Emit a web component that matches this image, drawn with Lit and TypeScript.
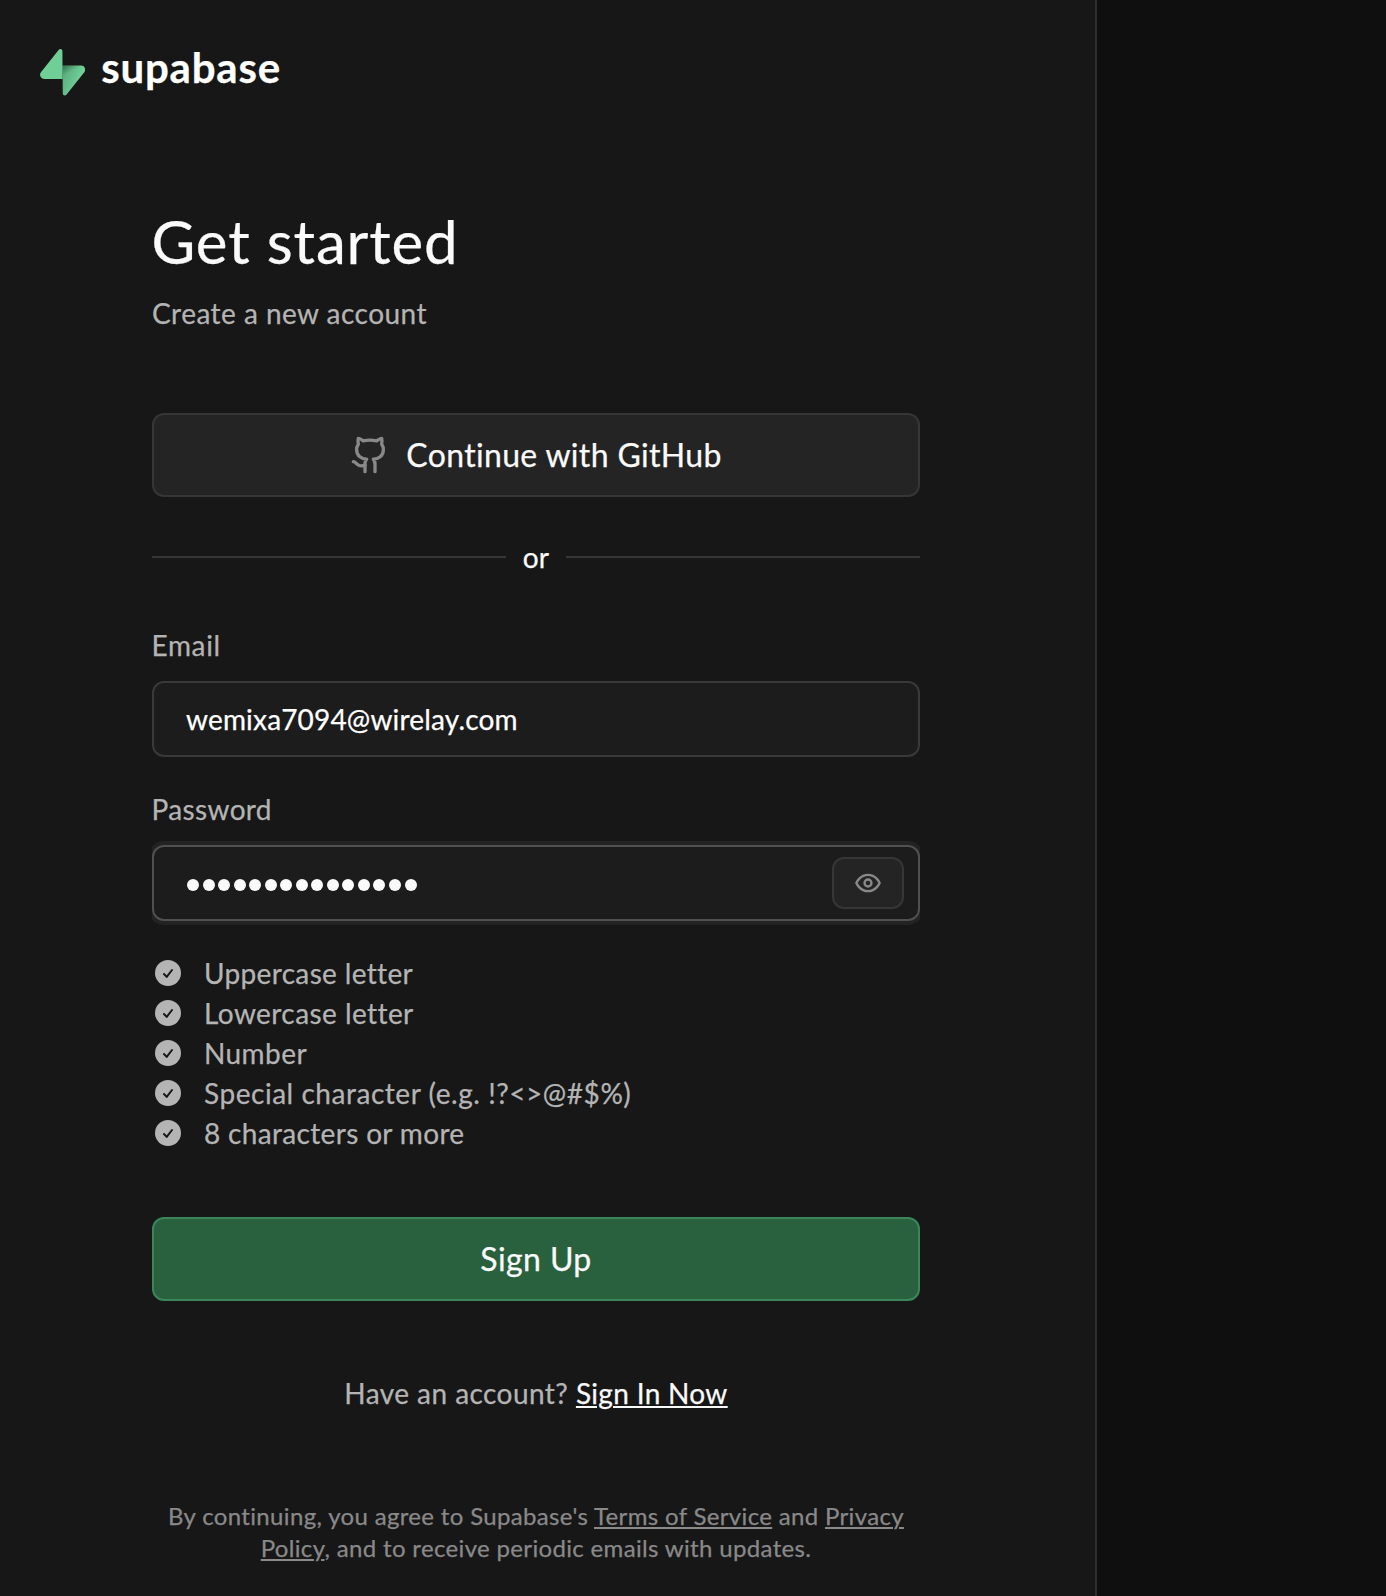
import { LitElement, html, css } from "lit";
import { customElement, property, state } from "lit/decorators.js";

@customElement("brand-logo")
class BrandLogo extends LitElement {
  static styles = css`
    :host { display: flex; gap: 16px; padding-left: 40px; height: 47px; }
    .mark { width: 45.2px; height: 46.8px; display: block; }
    .word {
      font: 700 42px/36px Lato, "Liberation Sans", sans-serif;
      letter-spacing: 0.8px;
      color: #fff;
    }
  `;
  render() {
    return html`
      <svg class="mark" viewBox="0 0 109 113" fill="none">
        <defs>
          <linearGradient id="base" x1="53.97" y1="54.97" x2="94.16" y2="71.83" gradientUnits="userSpaceOnUse">
            <stop stop-color="#58a97a" />
            <stop offset="1" stop-color="#6fcf97" />
          </linearGradient>
          <linearGradient id="shade" x1="36.16" y1="30.58" x2="54.48" y2="65.08" gradientUnits="userSpaceOnUse">
            <stop stop-opacity="0.6" />
            <stop offset="1" stop-opacity="0" />
          </linearGradient>
        </defs>
        <path fill="url(#base)" d="M63.7076 110.284C60.8481 113.885 55.0502 111.912 54.9813 107.314L53.9738 40.0627L99.1935 40.0627C107.384 40.0627 111.952 49.5228 106.859 55.9374L63.7076 110.284Z" />
        <path fill="url(#shade)" d="M63.7076 110.284C60.8481 113.885 55.0502 111.912 54.9813 107.314L53.9738 40.0627L99.1935 40.0627C107.384 40.0627 111.952 49.5228 106.859 55.9374L63.7076 110.284Z" />
        <path fill="#6fcf97" d="M45.317 2.07103C48.1765 -1.53037 53.9745 0.442937 54.0434 5.041L54.4849 72.2922H9.83113C1.64038 72.2922 -2.92775 62.8321 2.1655 56.4175L45.317 2.07103Z" />
      </svg>
      <span class="word">supabase</span>
    `;
  }
}

@customElement("password-rule")
class PasswordRule extends LitElement {
  @property() label = "";
  static styles = css`
    :host { display: flex; align-items: center; height: 40px; padding-left: 3px; gap: 23px; }
    .check { width: 26px; height: 26px; flex: none; }
    .text { line-height: 40px; white-space: nowrap; }
  `;
  render() {
    return html`
      <svg class="check" viewBox="0 0 26 26" fill="none">
        <circle cx="13" cy="13" r="13" fill="#b4b4b4" />
        <path d="M9 14l2.7 2.9L17 10" stroke="#171717" stroke-width="2" stroke-linecap="round" stroke-linejoin="round" />
      </svg>
      <span class="text">${this.label}</span>
    `;
  }
}

@customElement("app-root")
class AppRoot extends LitElement {
  @state() private email = "wemixa7094@wirelay.com";
  @state() private passwordLength = 15;

  private rules = [
    { label: "Uppercase letter", cls: "t34" },
    { label: "Lowercase letter", cls: "t43" },
    { label: "Number", cls: "t43" },
    { label: "Special character (e.g. !?<>@#$%)", cls: "t54" },
    { label: "8 characters or more", cls: "t34" },
  ];

  static styles = css`
    :host {
      display: block;
      height: 1596px;
      overflow: hidden;
      background: #0f0f0f;
      color: #b4b4b4;
      font: 28px/40px Lato, "Liberation Sans", sans-serif;
      -webkit-text-stroke-width: 0.25px;
    }
    * { box-sizing: border-box; }
    .panel {
      width: 1097px;
      height: 100%;
      padding-top: 49px;
      background: #171717;
      border-right: 2px solid #2e2e2e;
    }
    .form { width: 768px; margin: 109px 0 0 152px; }
    .title {
      margin: 0 0 16px -0.5px;
      font-size: 60px;
      font-weight: 400;
      line-height: 72px;
      letter-spacing: 0.85px;
      color: #fafafa;
    }
    .subtitle { margin: 0 0 80px; letter-spacing: 0.46px; }
    .button {
      display: flex;
      align-items: center;
      justify-content: center;
      gap: 16px;
      width: 100%;
      height: 84px;
      padding: 0;
      border: 2px solid #363636;
      border-radius: 12px;
      background: #242424;
      color: #fafafa;
      font: inherit;
      font-size: 32px;
      letter-spacing: 0.33px;
    }
    .button-text { padding-bottom: 1px; }
    .github { width: 40px; height: 40px; }
    .primary { margin-top: 64px; background: #29613e; border-color: #3a855a; letter-spacing: 0.4px; }
    .divider { display: flex; align-items: center; height: 40px; margin: 40px 0 48px; }
    .rule { flex: 1; height: 2px; background: #363636; }
    .or { width: 60px; text-align: center; color: #fafafa; letter-spacing: 0.3px; }
    .label { display: block; margin: 0 0 16px -0.5px; }
    .email-label { letter-spacing: 0.65px; }
    .password-label { margin-top: 32px; letter-spacing: 0.36px; }
    .field {
      display: flex;
      align-items: center;
      height: 76px;
      padding: 0 14px 0 32px;
      border: 2px solid #393939;
      border-radius: 12px;
      background: #1c1c1c;
      color: #fff;
    }
    .value { letter-spacing: 0.17px; }
    .focused {
      justify-content: space-between;
      border-color: #505050;
      box-shadow: 0 0 0 4px #232323;
      clip-path: inset(-4px 0);
      padding-left: 33.3px;
    }
    .dots { display: flex; gap: 3.52px; padding-top: 4px; }
    .dot { width: 12px; height: 12px; border-radius: 50%; background: #fafafa; }
    .reveal {
      display: flex;
      align-items: center;
      justify-content: center;
      width: 72px;
      height: 52px;
      padding: 0;
      border: 2px solid #363636;
      border-radius: 12px;
      background: #242424;
    }
    .eye { width: 28px; height: 28px; }
    .rules { margin-top: 32px; }
    .t34 { letter-spacing: 0.34px; }
    .t43 { letter-spacing: 0.43px; }
    .t54 { letter-spacing: 0.54px; }
    .signin { margin: 72px 0 87px; text-align: center; letter-spacing: 0.44px; }
    .link {
      color: inherit;
      text-decoration: underline;
      text-decoration-thickness: 2px;
      text-underline-offset: 2px;
    }
    .bright { color: #fafafa; letter-spacing: 0.33px; }
    .terms {
      margin: 0;
      padding: 0 8px;
      text-align: center;
      font-size: 24px;
      line-height: 32px;
      letter-spacing: 0.34px;
      color: #898989;
    }
  `;

  render() {
    return html`
      <div class="panel">
        <brand-logo></brand-logo>
        <main class="form">
          <h1 class="title">Get started</h1>
          <p class="subtitle">Create a new account</p>
          <button class="button">
            <svg class="github" viewBox="0 0 24 24" fill="none" stroke="#898989" stroke-width="2" stroke-linecap="round" stroke-linejoin="round">
              <path d="M15 22v-4a4.8 4.8 0 0 0-1-3.5c3 0 6-2 6-5.5.08-1.25-.27-2.48-1-3.5.28-1.15.28-2.35 0-3.5 0 0-1 0-3 1.5-2.64-.5-5.36-.5-8 0C6 2 5 2 5 2c-.3 1.15-.3 2.35 0 3.5A5.403 5.403 0 0 0 4 9c0 3.5 3 5.5 6 5.5-.39.49-.68 1.05-.85 1.65-.17.6-.22 1.23-.15 1.85v4" />
              <path d="M9 18c-4.51 2-5-2-7-2" />
            </svg>
            <span class="button-text">Continue with GitHub</span>
          </button>
          <div class="divider"><span class="rule"></span><span class="or">or</span><span class="rule"></span></div>
          <label class="label email-label">Email</label>
          <div class="field"><span class="value">${this.email}</span></div>
          <label class="label password-label">Password</label>
          <div class="field focused">
            <div class="dots">${Array.from({ length: this.passwordLength }, () => html`<span class="dot"></span>`)}</div>
            <button class="reveal" aria-label="Show password">
              <svg class="eye" viewBox="0 0 24 24" fill="none" stroke="#898989" stroke-width="2" stroke-linecap="round" stroke-linejoin="round">
                <path d="M2 12s3-7 10-7 10 7 10 7-3 7-10 7-10-7-10-7Z" />
                <circle cx="12" cy="12" r="3" />
              </svg>
            </button>
          </div>
          <div class="rules">
            ${this.rules.map((r) => html`<password-rule class=${r.cls} .label=${r.label}></password-rule>`)}
          </div>
          <button class="button primary"><span class="button-text">Sign Up</span></button>
          <p class="signin">Have an account? <a class="link bright">Sign In Now</a></p>
          <p class="terms">By continuing, you agree to Supabase's <a class="link">Terms of Service</a> and <a class="link">Privacy Policy</a>, and to receive periodic emails with updates.</p>
        </main>
      </div>
    `;
  }
}
